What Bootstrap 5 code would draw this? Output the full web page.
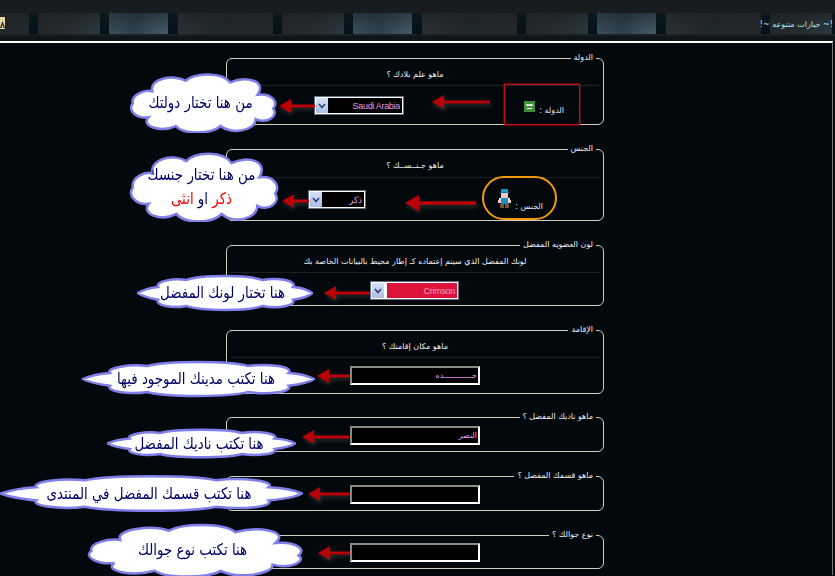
<!DOCTYPE html>
<html lang="ar">
<head>
  <meta charset="UTF-8" />
  <title>خيارات متنوعه</title>
  <link href="https://cdn.jsdelivr.net/npm/bootstrap@5.3.0/dist/css/bootstrap.min.css" rel="stylesheet">
  <style>
    html, body { height: 576px; overflow: hidden; }
    body { background: #03080c; color: #eceff4; font-family: "DejaVu Sans", sans-serif; font-size: 8px; }
    .page-wrap { width: 835px; height: 576px; overflow: hidden; }

    /* top strip */
    .top-gap { height: 13px; background: #181c1f; }
    .top-strip {
      height: 21px; padding-right: 2px;
      background:
        linear-gradient(180deg, rgba(24,28,31,.5), rgba(24,28,31,.2) 55%, rgba(24,28,31,0)),
        repeating-linear-gradient(90deg,
          #03121a 29px, #03121a 38px,
          #25292b 38px, #262d30 70px, #2a3a42 100px,
          #03121a 100px, #03121a 109px,
          #38505c 109px, #2f424c 135px, #435c69 168px,
          #03121a 168px, #03121a 178px,
          #2a3134 178px, #20282b 225px, #23292c 273px);
    }
    .top-title { color: #a8e4f6; font-size: 8px; line-height: 24px; }
    .warn-tab { width: 5px; height: 12px; margin-top: 4px; background: #e8d8a8; }
    .top-under { height: 7px; background: linear-gradient(180deg, #1a1f22 0 2px, #0f1518 2px); }
    .main-area { border-top: 2px solid #fff; border-right: 1px solid #777; margin-right: 2px; padding: 9px 0 0 226px; position: relative; height: 534px; gap: 18px; }

    /* fieldsets */
    .opt-box { width: 378px; border: 1px solid #cfcfc0; border-radius: 6px; padding: 0; margin: 0; min-width: 0; }
    .opt-box legend { float: none; width: auto; margin: 0 7px 0 0; padding: 0 3px; font-size: 8px; line-height: 12px; color: #eceff4; }
    .opt-ask { height: 22px; line-height: 22px; text-align: center; border-bottom: 1px solid #1b2023; margin: 0 3px; }
    .ask-2 { height: 23px; }
    .ctl-row { padding-top: 10px; height: 38px; }
    .ctl-2 { padding-top: 12px; height: 42px; }
    .ctl-3 { padding-top: 8px; height: 32px; }
    .ctl-4 { padding-top: 8px; height: 35px; }
    .ctl-5 { padding-top: 3px; height: 28px; }
    .ctl-6 { padding-top: 2px; height: 27px; }
    .ctl-7 { padding-top: 3px; height: 28px; }
    .pull-up { margin-top: -1px; }
    .at-87 { margin-left: 87px; }
    .at-81 { margin-left: 81px; }
    .at-143 { margin-left: 143px; }
    .at-123 { margin-left: 123px; }
    .side-label { margin-left: auto; color: #dfe6ff; white-space: nowrap; line-height: 14px; }
    .lab-1 { margin-right: 39px; margin-top: 1px; }
    .lab-2 { margin-right: 60px; margin-top: -3px; height: 27px; align-self: flex-start; }
    .lift-av { margin-bottom: 5px; }

    /* select + text fields */
    .pick-box { height: 19px; border: 2px solid #fff; outline: 1px solid #5f6f80; outline-offset: -1px; background: #000; }
    .pick-light { background: #fff; }
    .pick-w1 { width: 90px; }
    .pick-w2 { width: 58px; }
    .pick-w3 { width: 89px; }
    .pick-btn { width: 12px; background: linear-gradient(180deg, #d5e0f5, #adc0e6); flex: none; }
    .pick-box select {
      appearance: none; border: 0; border-radius: 0; outline: 0; background: #000; color: #e59ae8;
      font: 9px "Liberation Sans", sans-serif; letter-spacing: -.3px; height: 15px; width: 100%; margin-left: 3px; padding: 0 2px; text-align: right;
    }
    .pick-box select.is-red { background: #dc143c; color: #ff9ac0; }
    .text-field {
      width: 130px; height: 19px; border: 2px solid #fff; border-top-color: #8c8c84; border-left-color: #8c8c84;
      border-radius: 0; background: #000; color: #f09af0; font: 8px "DejaVu Sans", sans-serif; padding: 0 1px; text-align: right; outline: 0;
    }

    /* overlays drawn on top of the form */
    .overlay-mark { position: absolute; pointer-events: none; }
    .ring-red { left: 504px; top: 84px; width: 76px; height: 41px; border: 1px solid #c80f14; box-shadow: 0 0 0 .4px #c80f14; }
    .ring-orange { left: 482px; top: 176px; width: 75px; height: 44px; border: 2px solid #f09c0a; border-radius: 22px; }
    .red-arrow { position: absolute; height: 16px; filter: drop-shadow(1px 2px 2px rgba(90,90,90,.55)); }
    .cloud-note { position: absolute; display: flex; flex-direction: column; align-items: center; justify-content: center; padding-right: 5px; color: #000066; font-size: 13.4px; line-height: 24px; white-space: nowrap; }
    .cloud-note svg { position: absolute; left: 0; top: 0; width: 100%; height: 100%; overflow: visible; fill: #fff; stroke: #7f7fea; stroke-width: 2.5; }
    .cloud-note span { position: relative; }
    .cloud-line { transform: scaleY(1.2); }
    .tone-red { color: #f00; }
    .c1 { left: 125px; top: 72px; width: 156px; height: 61px; }
    .c2 { left: 125px; top: 151px; width: 158px; height: 71px; }
    .c3 { left: 137px; top: 274px; width: 176px; height: 38px; }
    .c4 { left: 82px; top: 360px; width: 233px; height: 38px; }
    .c5 { left: 107px; top: 428px; width: 189px; height: 31px; }
    .c6 { left: 0; top: 474px; width: 303px; height: 39px; }
    .c7 { left: 80px; top: 523px; width: 230px; height: 54px; }
  </style>
</head>
<body>
  <svg width="0" height="0" class="position-absolute">
    <symbol id="cloudFlat" viewBox="0 0 300 100" preserveAspectRatio="none">
      <path vector-effect="non-scaling-stroke" d="M1 50C12 40 22 36 36 34C30 20 62 10 84 16C110 2 190 2 214 16C240 8 274 18 266 34C282 36 292 42 299 50C292 60 282 64 266 68C272 84 240 92 214 84C190 98 110 98 84 84C60 92 30 82 36 68C22 64 10 60 1 50Z"/>
    </symbol>
    <symbol id="cloudTall" viewBox="0 0 160 70" preserveAspectRatio="none">
      <path vector-effect="non-scaling-stroke" d="M8 36C6 26 20 20 28 22C24 8 50 2 62 10C72 0 100 0 108 12C124 4 146 10 136 26C150 24 158 34 152 42C158 50 146 60 134 54C134 68 108 72 98 62C88 72 60 72 52 62C36 70 16 62 24 52C12 54 2 44 8 36Z"/>
    </symbol>
    <symbol id="arrowLeft" viewBox="0 0 60 16" preserveAspectRatio="xMinYMid slice">
      <path d="M0 8L12 1V6.500H60V9.500H12V15Z" fill="#b80006"/>
    </symbol>
  </svg>

  <div class="page-wrap">
    <div class="top-gap"></div>
    <div class="top-strip d-flex justify-content-between">
      <div class="warn-tab"><svg width="5" height="12" viewBox="0 0 5 12" class="d-block"><path d="M0 11L2.500 4L5 11H3.500L2.500 7.500L1.500 11Z" fill="#2a2420"/></svg></div>
      <div class="top-title" dir="rtl">!~ خيارات متنوعه ~!</div>
    </div>
    <div class="top-under"></div>

    <div class="main-area d-flex flex-column">
      <fieldset class="opt-box" dir="rtl">
        <legend>الدولة</legend>
        <div class="opt-ask">ماهو علم بلادك ؟</div>
        <div class="ctl-row d-flex" dir="ltr">
          <div class="pick-box pick-w1 at-87 d-flex">
            <span class="pick-btn d-flex align-items-center justify-content-center"><svg width="8" height="6" viewBox="0 0 8 6"><path d="M1 1L4 4.500L7 1" fill="none" stroke="#2a3f80" stroke-width="1.600"/></svg></span>
            <select dir="rtl"><option>Saudi Arabia</option></select>
          </div>
          <div class="side-label lab-1 d-flex gap-1 align-items-center">
            <svg width="11" height="11" viewBox="0 0 11 11" class="mb-2"><rect width="11" height="11" fill="#3f8f3c"/><rect x="2" y="3" width="7" height="2" fill="#d7ead2"/><rect x="3" y="7" width="5" height="1" fill="#e9f3e6"/></svg>
            <span dir="rtl">الدولة :</span>
          </div>
        </div>
      </fieldset>

      <fieldset class="opt-box" dir="rtl">
        <legend>الجنس</legend>
        <div class="opt-ask ask-2">ماهو جـنــســك ؟</div>
        <div class="ctl-2 d-flex" dir="ltr">
          <div class="pick-box pick-w2 at-81 d-flex">
            <span class="pick-btn d-flex align-items-center justify-content-center"><svg width="8" height="6" viewBox="0 0 8 6"><path d="M1 1L4 4.500L7 1" fill="none" stroke="#2a3f80" stroke-width="1.600"/></svg></span>
            <select dir="rtl"><option>ذكر</option></select>
          </div>
          <div class="side-label lab-2 d-flex gap-1 align-items-end">
            <svg width="13" height="20" viewBox="0 0 13 20" shape-rendering="crispEdges" class="lift-av">
              <rect x="3" y="0" width="7" height="3" fill="#1e9ac8"/><rect x="2" y="3" width="9" height="1" fill="#1478a0"/>
              <rect x="3" y="4" width="7" height="5" fill="#f6c6c0"/><rect x="1" y="9" width="11" height="2" fill="#eee"/>
              <rect x="3" y="9" width="7" height="6" fill="#1d8cc0"/><rect x="0" y="11" width="3" height="3" fill="#f6c6c0"/><rect x="10" y="11" width="3" height="3" fill="#f6c6c0"/>
              <rect x="2" y="15" width="4" height="4" fill="#6e5530"/><rect x="7" y="15" width="4" height="4" fill="#6e5530"/>
            </svg>
            <span dir="rtl">الجنس :</span>
          </div>
        </div>
      </fieldset>

      <fieldset class="opt-box" dir="rtl">
        <legend>لون العضويه المفضل</legend>
        <div class="opt-ask">لونك المفضل الذي سيتم إعتماده كـ إطار محيط بالبيانات الخاصة بك</div>
        <div class="ctl-3 d-flex" dir="ltr">
          <div class="pick-box pick-light pick-w3 at-143 d-flex">
            <span class="pick-btn d-flex align-items-center justify-content-center"><svg width="8" height="6" viewBox="0 0 8 6"><path d="M1 1L4 4.500L7 1" fill="none" stroke="#2a3f80" stroke-width="1.600"/></svg></span>
            <select dir="rtl" class="is-red"><option>Crimson</option></select>
          </div>
        </div>
      </fieldset>

      <fieldset class="opt-box" dir="rtl">
        <legend>الإقامة</legend>
        <div class="opt-ask">ماهو مكان إقامتك ؟</div>
        <div class="ctl-4 d-flex" dir="ltr"><input class="text-field at-123" dir="rtl" value="جــــــــــــده"></div>
      </fieldset>

      <fieldset class="opt-box pull-up" dir="rtl">
        <legend>ماهو ناديك المفضل ؟</legend>
        <div class="ctl-5 d-flex" dir="ltr"><input class="text-field at-123" dir="rtl" value="النصر"></div>
      </fieldset>

      <fieldset class="opt-box" dir="rtl">
        <legend>ماهو قسمك المفضل ؟</legend>
        <div class="ctl-7 d-flex" dir="ltr"><input class="text-field at-123" dir="rtl"></div>
      </fieldset>

      <fieldset class="opt-box" dir="rtl">
        <legend>نوع جوالك ؟</legend>
        <div class="ctl-6 d-flex" dir="ltr"><input class="text-field at-123" dir="rtl"></div>
      </fieldset>
    </div>
  </div>

  <!-- annotations over the form -->
  <div class="overlay-mark ring-red"></div>
  <div class="overlay-mark ring-orange"></div>

  <svg class="red-arrow" style="left:432px;top:94px;width:58px"><use href="#arrowLeft"/></svg>
  <svg class="red-arrow" style="left:279px;top:98px;width:36px"><use href="#arrowLeft"/></svg>
  <svg class="red-arrow" style="left:405px;top:195px;width:71px"><use href="#arrowLeft"/></svg>
  <svg class="red-arrow" style="left:282px;top:193px;width:27px"><use href="#arrowLeft"/></svg>
  <svg class="red-arrow" style="left:324px;top:285px;width:46px"><use href="#arrowLeft"/></svg>
  <svg class="red-arrow" style="left:317px;top:368px;width:33px"><use href="#arrowLeft"/></svg>
  <svg class="red-arrow" style="left:302px;top:429px;width:47px"><use href="#arrowLeft"/></svg>
  <svg class="red-arrow" style="left:308px;top:486px;width:42px"><use href="#arrowLeft"/></svg>
  <svg class="red-arrow" style="left:318px;top:545px;width:32px"><use href="#arrowLeft"/></svg>

  <div class="cloud-note c1" dir="rtl"><svg><use href="#cloudTall"/></svg><span class="cloud-line">من هنا تختار دولتك</span></div>
  <div class="cloud-note c2" dir="rtl"><svg><use href="#cloudTall"/></svg><span class="cloud-line">من هنا تختار جنسك</span><span class="cloud-line"><span class="tone-red">ذكر</span> او <span class="tone-red">انثى</span></span></div>
  <div class="cloud-note c3" dir="rtl"><svg><use href="#cloudFlat"/></svg><span class="cloud-line">هنا تختار لونك المفضل</span></div>
  <div class="cloud-note c4" dir="rtl"><svg><use href="#cloudFlat"/></svg><span class="cloud-line">هنا تكتب مدينك الموجود فيها</span></div>
  <div class="cloud-note c5" dir="rtl"><svg><use href="#cloudFlat"/></svg><span class="cloud-line">هنا تكتب ناديك المفضل</span></div>
  <div class="cloud-note c6" dir="rtl"><svg><use href="#cloudFlat"/></svg><span class="cloud-line">هنا تكتب قسمك المفضل في المنتدى</span></div>
  <div class="cloud-note c7" dir="rtl"><svg><use href="#cloudTall"/></svg><span class="cloud-line">هنا تكتب نوع جوالك</span></div>

  <script src="https://cdn.jsdelivr.net/npm/bootstrap@5.3.0/dist/js/bootstrap.bundle.min.js"></script>
</body>
</html>
